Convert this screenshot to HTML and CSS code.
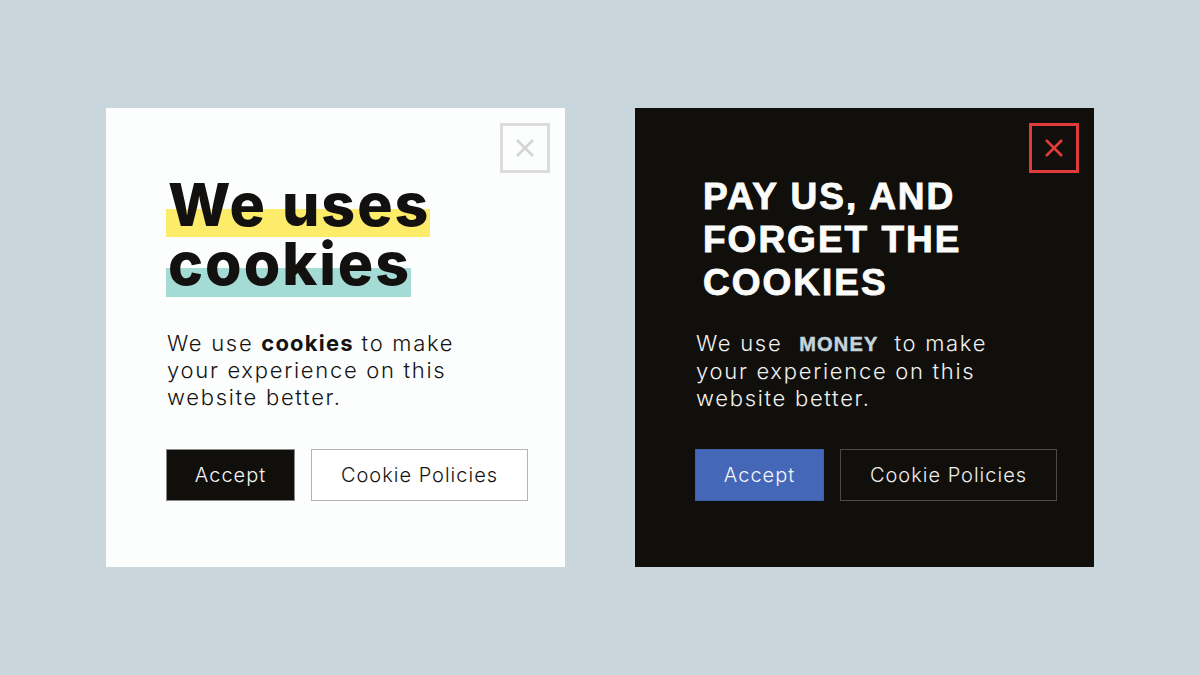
FILE: index.html
```html
<!DOCTYPE html>
<html lang="en">
<head>
<meta charset="utf-8">
<title>Cookie banners</title>
<link rel="stylesheet" href="styles.css">
</head>
<body>
<main class="stage">
  <section class="card card-light">
    <button class="close close-light" aria-label="Close">
      <svg viewBox="0 0 20 20" width="20" height="20"><path d="M2 2 L18 18 M18 2 L2 18" stroke="#d4d4d4" stroke-width="2.6" fill="none"/></svg>
    </button>
    <h1 class="title-light">
      <span class="line hl-yellow">We uses</span>
      <span class="line hl-teal">cookies</span>
    </h1>
    <p class="body-text body-light">We use <b class="strong-light">cookies</b> to make your experience on this website better.</p>
    <div class="actions actions-light">
      <button class="btn btn-accept-light">Accept</button>
      <button class="btn btn-policy-light">Cookie Policies</button>
    </div>
  </section>

  <section class="card card-dark">
    <button class="close close-dark" aria-label="Close">
      <svg viewBox="0 0 20 20" width="20" height="20"><path d="M2 2 L18 18 M18 2 L2 18" stroke="#e23b3b" stroke-width="2.6" fill="none"/></svg>
    </button>
    <h1 class="title-dark">PAY US, AND<br>FORGET THE<br>COOKIES</h1>
    <p class="body-text body-dark">We use <b class="strong-dark">MONEY</b> to make your experience on this website better.</p>
    <div class="actions actions-dark">
      <button class="btn btn-accept-dark">Accept</button>
      <button class="btn btn-policy-dark">Cookie Policies</button>
    </div>
  </section>
</main>
</body>
</html>
```
FILE: styles.css
```css
* { box-sizing: border-box; }
html, body { margin: 0; padding: 0; }
body {
  width: 1200px;
  height: 675px;
  background: #c9d6dc;
  font-family: "Inter", "Liberation Sans", sans-serif;
}
.stage {
  height: 675px;
  display: flex;
  justify-content: center;
  align-items: center;
  gap: 70px;
}
.card {
  position: relative;
  width: 459px;
  height: 459px;
  padding: 67px 20px 0 60px;
  display: flex;
  flex-direction: column;
  align-items: flex-start;
}
.card-light { background: #fcfefd; }
.card-dark { background: #110f0c; }

.close {
  position: absolute;
  top: 15px;
  right: 15px;
  width: 50px;
  height: 50px;
  background: transparent;
  padding: 0;
  display: flex;
  align-items: center;
  justify-content: center;
  cursor: pointer;
}
.close-light { border: 3px solid #dcdcdc; }
.close-dark { border: 3px solid #e23b3b; }

.title-light {
  position: relative;
  z-index: 0;
  margin: 0;
  font-weight: 800;
  font-size: 59px;
  line-height: 59px;
  letter-spacing: 2px;
  color: #121110;
  display: flex;
  flex-direction: column;
  align-items: flex-start;
}
.line {
  position: relative;
  display: block;
  padding: 0 0 0 2px;
}
.line::before {
  content: "";
  position: absolute;
  left: 0;
  right: 0;
  top: 34px;
  height: 28px;
  z-index: -1;
}
.hl-yellow::before { background: #fdeb6a; }
.hl-teal::before { background: #a4dbd5; top: 34px; height: 29px; }

.title-dark {
  margin: 0 0 0 8px;
  font-family: "Liberation Sans", Arial, sans-serif;
  font-weight: 700;
  font-size: 37px;
  line-height: 43px;
  letter-spacing: 2px;
  -webkit-text-stroke: 0.9px #fbfbfa;
  color: #fbfbfa;
}

.body-text {
  margin: 0 0 0 1px;
  width: 310px;
  font-size: 22px;
  line-height: 27px;
  font-weight: 300;
  letter-spacing: 1.7px;
  color: #141312;
}
.body-light { margin-top: 37px; }
.strong-light { font-weight: 700; letter-spacing: 1.2px; }
.body-dark { color: #f2f2f0; margin-top: 26px; }
.strong-dark {
  font-family: "Liberation Sans", Arial, sans-serif;
  font-weight: 700;
  font-size: 20px;
  letter-spacing: 1.2px;
  -webkit-text-stroke: 0.5px #c4d3dc;
  color: #c4d3dc;
  margin: 0 8px 0 9px;
}

.actions {
  display: flex;
  gap: 16px;
}
.actions-light { margin-top: 38px; }
.actions-dark { margin-top: 37px; }
.btn {
  height: 52px;
  font-family: "Inter", sans-serif;
  font-size: 20px;
  font-weight: 300;
  letter-spacing: 1px;
  padding: 0;
  cursor: pointer;
}
.btn-accept-light {
  width: 129px;
  background: #110f0c;
  color: #f4f4f4;
  border: 1px solid #8a8a8a;
}
.btn-policy-light {
  width: 217px;
  background: #ffffff;
  color: #161514;
  border: 1px solid #b4b4b4;
}
.btn-accept-dark {
  width: 129px;
  background: #4467b7;
  color: #f4f6fb;
  border: 1px solid #3f5fa8;
}
.btn-policy-dark {
  width: 217px;
  background: #110f0c;
  color: #eeeeec;
  border: 1px solid #4a4a48;
}
```
